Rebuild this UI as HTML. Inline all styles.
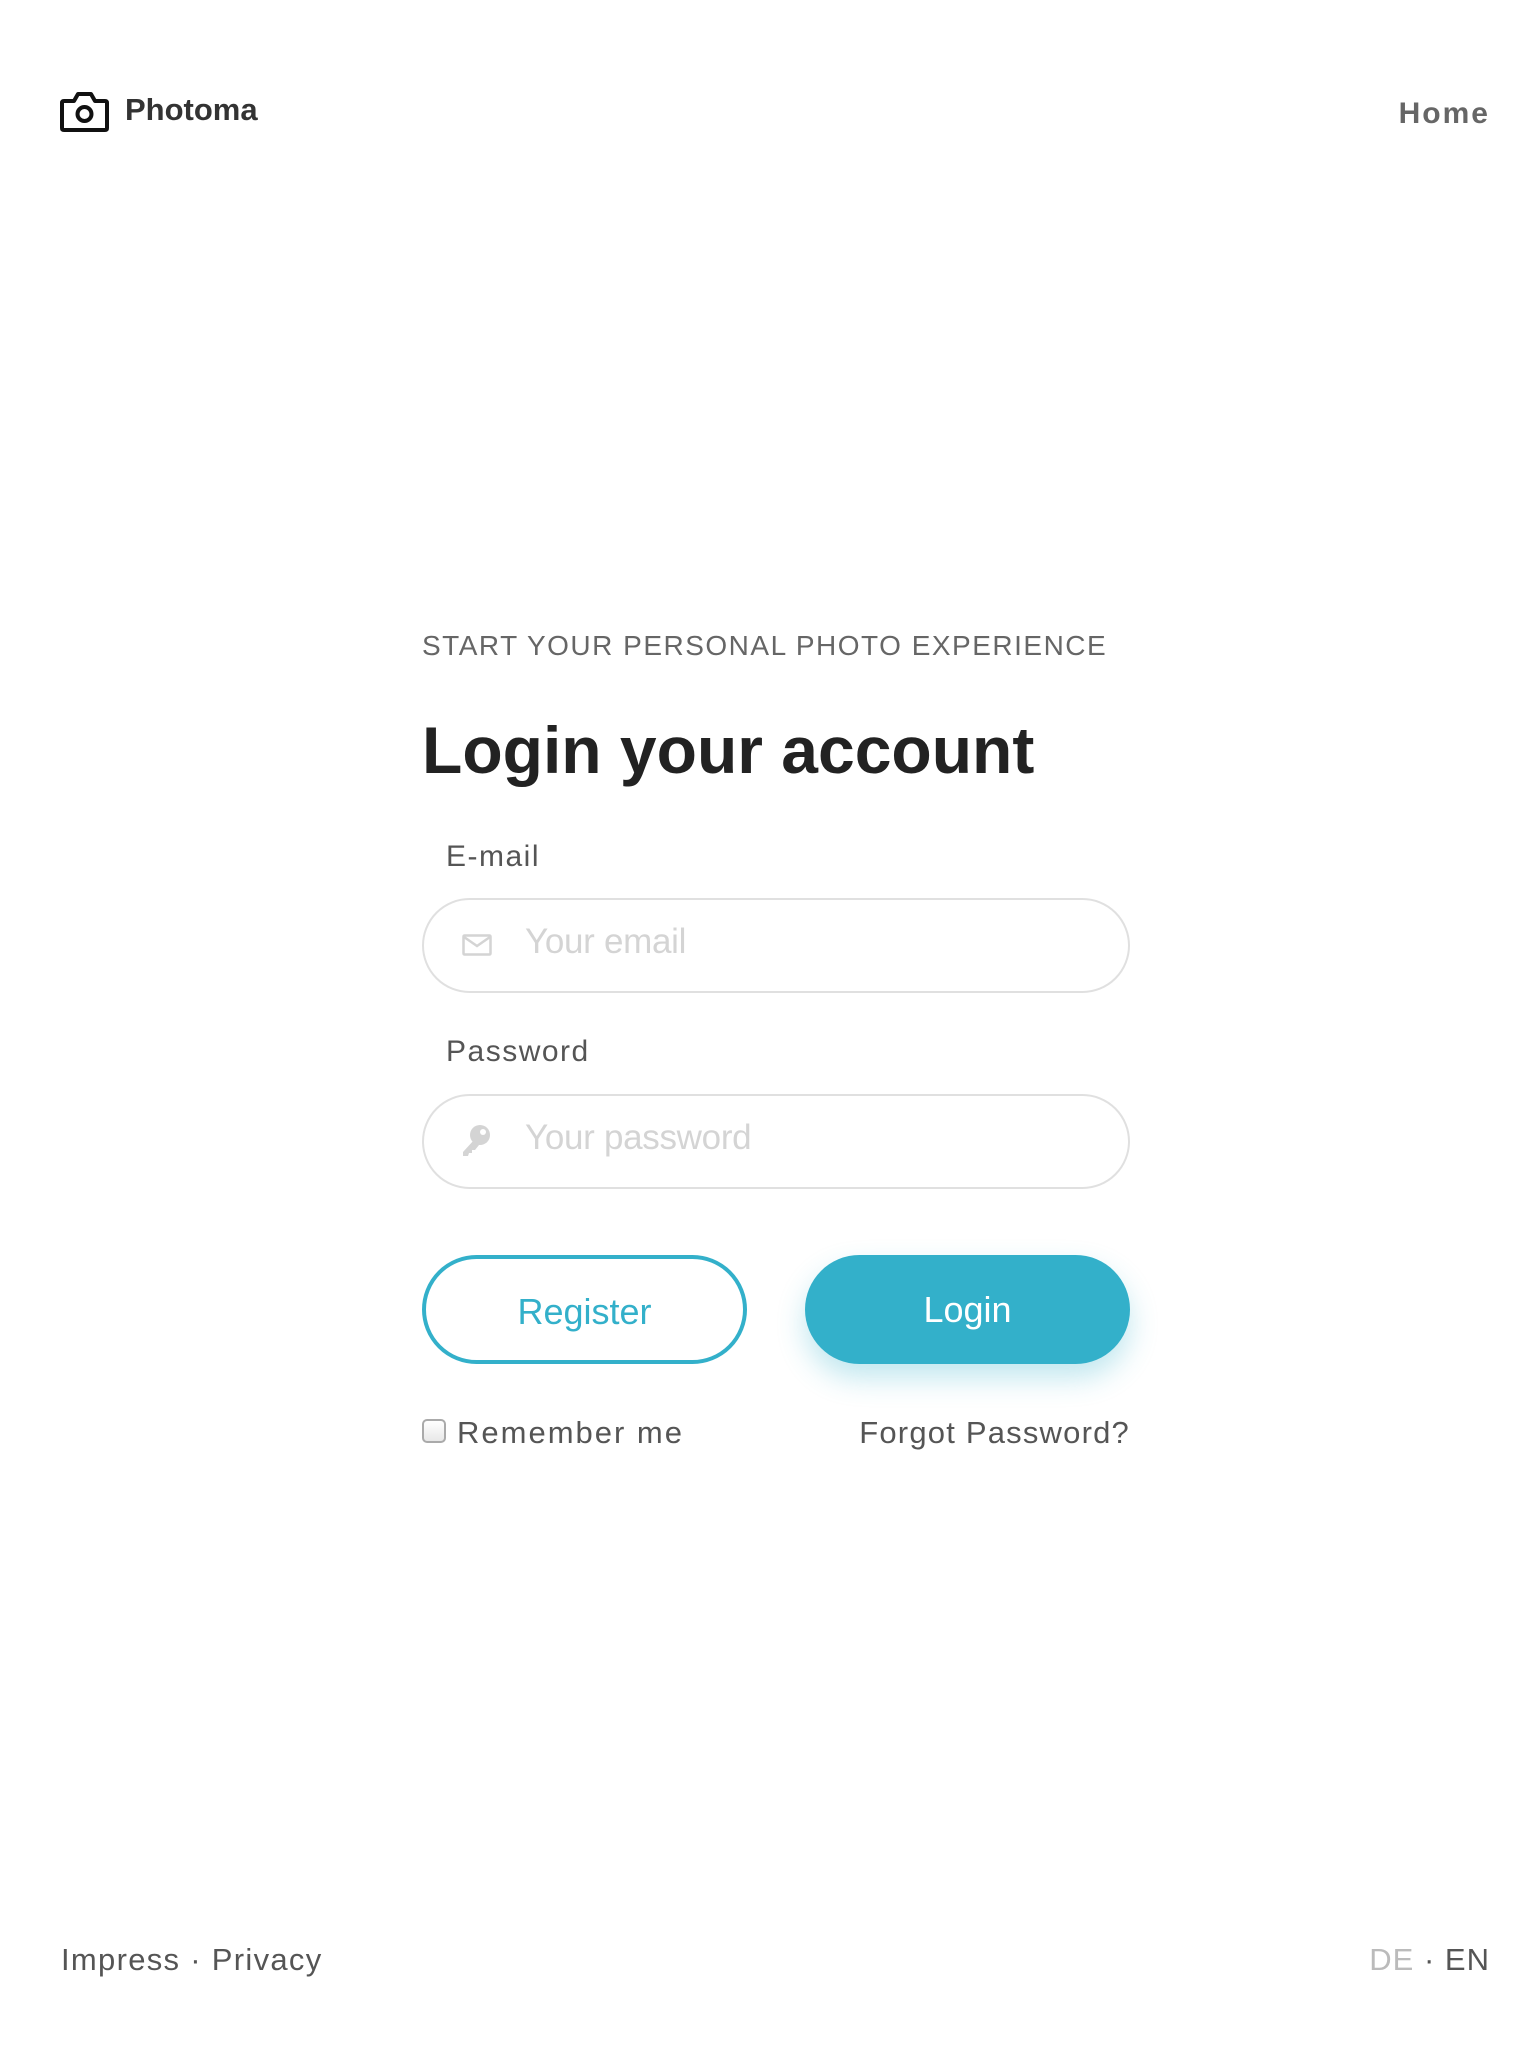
<!DOCTYPE html>
<html><head><meta charset="utf-8"><style>
*{margin:0;padding:0;box-sizing:border-box}
body{width:1536px;height:2048px;background:#fff;font-family:"Liberation Sans",sans-serif;position:relative;overflow:hidden}
.a{position:absolute;white-space:nowrap}
.inp{position:absolute;left:422px;width:708px;height:95px;border:2px solid #e0e0e0;border-radius:48px}
.ph{position:absolute;left:101px;top:22px;font-size:35px;color:#d4d4d4;letter-spacing:-0.3px}
.btn{position:absolute;top:1255px;height:109px;width:325px;border-radius:55px;font-size:36px;text-align:center;line-height:105px}
</style></head><body>
<svg class="a" style="left:60px;top:91px" width="49" height="41" viewBox="0 0 49 41"><path d="M4 10 H14 L18 3 H31 L35 10 H45 Q47 10 47 12 V37 Q47 39 45 39 H4 Q2 39 2 37 V12 Q2 10 4 10Z" fill="none" stroke="#111" stroke-width="4" stroke-linejoin="round"/><circle cx="24.5" cy="23" r="7" fill="none" stroke="#111" stroke-width="4"/></svg>
<div class="a" style="left:125px;top:92px;font-size:31px;font-weight:bold;color:#333">Photoma</div>
<div class="a" style="right:46px;top:97px;font-size:30px;font-weight:bold;color:#666;letter-spacing:2px">Home</div>
<div class="a" style="left:422px;top:630px;font-size:28px;color:#666;letter-spacing:1.5px">START YOUR PERSONAL PHOTO EXPERIENCE</div>
<div class="a" style="left:422px;top:712px;font-size:66px;font-weight:bold;color:#222">Login your account</div>
<div class="a" style="left:446px;top:840px;font-size:30px;color:#555;letter-spacing:1.5px">E-mail</div>
<div class="inp" style="top:898px"><svg class="a" style="left:38px;top:34px" width="30" height="22" viewBox="0 0 30 22"><rect x="1.5" y="1.5" width="27" height="19" rx="1" fill="none" stroke="#d4d4d4" stroke-width="2.5"/><path d="M2 3 L15 12 L28 3" fill="none" stroke="#d4d4d4" stroke-width="2.5"/></svg><div class="ph">Your email</div></div>
<div class="a" style="left:446px;top:1035px;font-size:30px;color:#555;letter-spacing:1.5px">Password</div>
<div class="inp" style="top:1094px"><svg class="a" style="left:36px;top:28px" width="32" height="34" viewBox="0 0 32 34"><circle cx="20" cy="11" r="10" fill="#d4d4d4"/><circle cx="23" cy="8" r="3" fill="#fff"/><path d="M14 16 L3 28 L3 32 L8 32 L9 29 L12 29 L12 26 L15 26 L19 21Z" fill="#d4d4d4"/></svg><div class="ph">Your password</div></div>
<div class="btn" style="left:422px;border:4px solid #33b0ca;color:#33b0ca">Register</div>
<div class="btn" style="left:805px;background:#33b0ca;color:#fff;line-height:109px;box-shadow:0 14px 28px rgba(51,176,202,0.3)">Login</div>
<div class="a" style="left:422px;top:1419px;width:24px;height:24px;border:2px solid #aaa;border-radius:5px;background:linear-gradient(#fff,#e8e8e8)"></div>
<div class="a" style="left:457px;top:1415px;font-size:31px;color:#555;letter-spacing:2px">Remember me</div>
<div class="a" style="right:406px;top:1415px;font-size:31px;color:#555;letter-spacing:1.2px">Forgot Password?</div>
<div class="a" style="left:61px;top:1942px;font-size:31px;color:#555;letter-spacing:1.3px">Impress · Privacy</div>
<div class="a" style="right:46px;top:1942px;font-size:31px;color:#555;letter-spacing:1px"><span style="color:#bbb">DE</span> · EN</div>
</body></html>
